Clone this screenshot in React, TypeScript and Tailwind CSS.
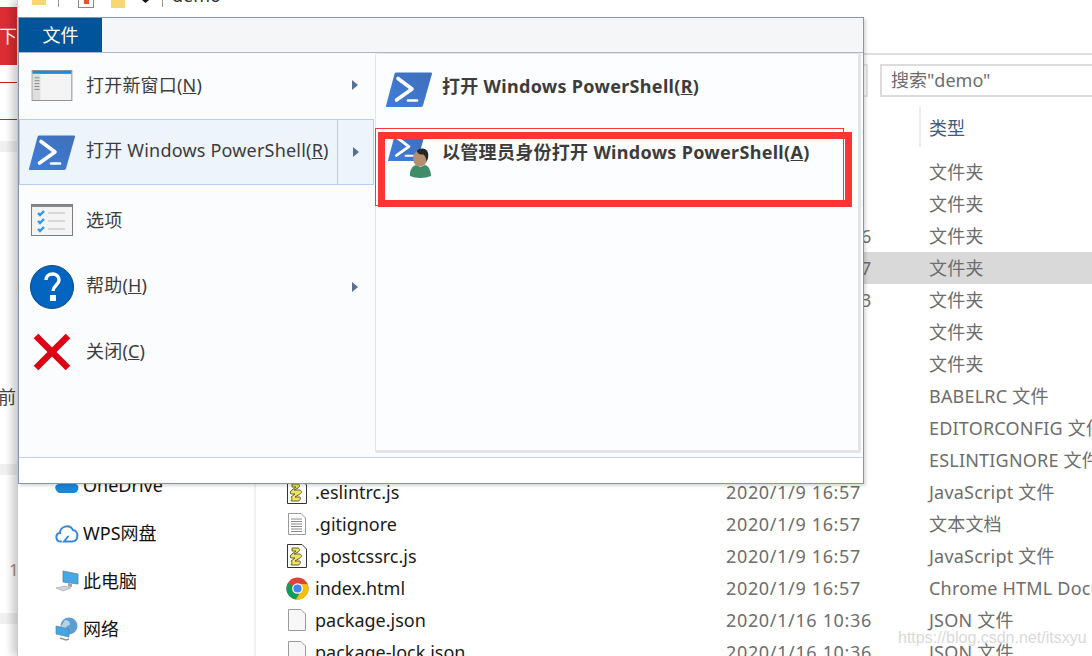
import React from "react";

const F = { fontFamily: '"Noto Sans","Noto Sans CJK SC",sans-serif' };

function Ps({ className = "" }: { className?: string }) {
  return (
    <svg viewBox="0 0 46 35" className={className}>
      <defs>
        <linearGradient id="psg" x1="0" y1="1" x2="1" y2="0">
          <stop offset="0" stopColor="#3f7ddc" />
          <stop offset="1" stopColor="#3f6fb8" />
        </linearGradient>
      </defs>
      <path d="M10 0.5H45a1 1 0 0 1 1 1.2L37 33.5a2 2 0 0 1-2 1.5H1a1 1 0 0 1-1-1.3L8.500 2a2 2 0 0 1 1.500-1.500z" fill="url(#psg)" />
      <path d="M12 6.500L26 17 10.500 28" fill="none" stroke="#fff" strokeWidth="3.600" strokeLinecap="round" strokeLinejoin="round" />
      <path d="M22 28.500H31" fill="none" stroke="#fff" strokeWidth="2.600" strokeLinecap="round" />
    </svg>
  );
}

function Win() {
  return (
    <svg viewBox="0 0 42 32" className="w-[42px] h-[31px]">
      <rect x=".5" y=".5" width="41" height="31" fill="#f4f4f4" stroke="#8e8e8e" />
      <rect x="1" y="1" width="40" height="3" fill="#1e88e5" />
      <rect x="1" y="4" width="8" height="27" fill="#dfdfdf" />
      <path d="M3 8h5M3 11h5M3 14h5M3 17h5M3 20h5" stroke="#888" strokeWidth="1" />
    </svg>
  );
}

function Opt() {
  return (
    <svg viewBox="0 0 42 32" className="w-[42px] h-[32px]">
      <rect x=".5" y=".5" width="41" height="31" fill="#f4f4f4" stroke="#7e7e7e" />
      <rect x="1" y="1" width="40" height="2" fill="#8a8a8a" />
      <path d="M7 9l2 2 4-4M7 17l2 2 4-4M7 25l2 2 4-4" fill="none" stroke="#2f96e8" strokeWidth="2.400" />
      <path d="M17 9h17M17 17h17M17 25h17" stroke="#bbb" strokeWidth="1" />
    </svg>
  );
}

function Help() {
  return (
    <svg viewBox="0 0 44 44" className="w-[44px] h-[44px]">
      <circle cx="22" cy="22" r="21.500" fill="#0465c0" stroke="#0a4a85" />
      <path d="M16 15c0-3.500 2.500-6 6.500-6s6.500 2.500 6.500 6c0 5-6 5.500-6 11" fill="none" stroke="#fff" strokeWidth="3.400" />
      <rect x="20" y="30" width="6" height="6" fill="#fff" />
    </svg>
  );
}

function CloseX() {
  return (
    <svg viewBox="0 0 38 38" className="w-[38px] h-[38px]">
      <path d="M3 3L35 35M35 3L3 35" stroke="#dc0014" strokeWidth="6.500" />
    </svg>
  );
}

function Arrow() {
  return (
    <svg viewBox="0 0 6 10" className="w-[6px] h-[10px]">
      <path d="M0 0L6 5 0 10z" fill="#5a6f92" />
    </svg>
  );
}

function Admin() {
  return (
    <svg viewBox="0 0 21 30" className="w-[21px] h-[30px]">
      <path d="M0 28c-.5-6 2.500-10 6-11l4.500 2 4.500-2c3.500 1 6 5 6 11-6 2.500-15 2.500-21 0z" fill="#3e8c68" />
      <ellipse cx="10" cy="10.500" rx="7" ry="8" fill="#b58e70" />
      <path d="M7 2.500C10 -.5 17 -.5 18 5c.6 3 .2 6-1.500 9-.2-3-.8-6-3-7.500C10 7 7 5.500 7 2.500z" fill="#262626" />
    </svg>
  );
}

function ScriptIcon() {
  return (
    <svg viewBox="0 0 20 24" className="w-[20px] h-[24px]">
      <path d="M.5.500H15l4.500 4.500V23.500H.5z" fill="#fff" stroke="#333" />
      <path d="M5 4h6c2 0 2 3 0 4l-4 2h6c2 1 2 3 0 4l-5 3h5c1 2 0 4-2 4H4c1-2 1-3 0-4l4-3H4c-1-1-1-3 1-4l4-3H5c0-1 0-2 0-3z" fill="#eee35c" stroke="#55552a" strokeWidth=".9" />
    </svg>
  );
}

function TextIcon() {
  return (
    <svg viewBox="0 0 18 22" className="w-[18px] h-[22px]">
      <path d="M.5.5H13l4.500 4.500V21.500H.5z" fill="#fff" stroke="#9a9a9a" />
      <path d="M3 6h11M3 8.500h11M3 11h11M3 13.500h11M3 16h11M3 18.500h11" stroke="#8a8a8a" strokeWidth="1" />
    </svg>
  );
}

function BlankIcon() {
  return (
    <svg viewBox="0 0 18 22" className="w-[18px] h-[22px]">
      <path d="M.5.5H13l4.500 4.500V21.500H.5z" fill="#f7f7f7" stroke="#9a9a9a" />
    </svg>
  );
}

function Chrome() {
  return (
    <svg viewBox="0 0 24 24" className="w-[23px] h-[23px]">
      <circle cx="12" cy="12" r="11.500" fill="#db4437" />
      <path d="M2 6.200A11.500 11.500 0 0 0 10.300 23.400L16 14 12 12z" fill="#0f9d58" />
      <path d="M10.300 23.400A11.500 11.500 0 0 0 22.600 7.500L12 7 16 14z" fill="#f4c20d" />
      <circle cx="12" cy="12" r="5.600" fill="#fff" />
      <circle cx="12" cy="12" r="4.300" fill="#4285f4" />
    </svg>
  );
}

function Onedrive() {
  return (
    <svg viewBox="0 0 24 16" className="w-[24px] h-[16px]">
      <path d="M1 13c-2-3 0-6 3-6 1-4 7-6 10-3 3-1 6 0 6 3 3 0 4 3 3 6-1 2-2 3-4 3H5c-2 0-3-1-4-3z" fill="#1b86d8" />
    </svg>
  );
}

function Cloud() {
  return (
    <svg viewBox="0 0 24 20" className="w-[24px] h-[20px]">
      <path d="M6 18.500c-6 0-6-8-1-8.500 0-6 9-10 13-3 6 1 6 11-1 11.500H9l4-5" fill="none" stroke="#3a86dc" strokeWidth="2" strokeLinecap="round" />
    </svg>
  );
}

function Pc() {
  return (
    <svg viewBox="0 0 24 22" className="w-[24px] h-[22px]">
      <path d="M8 1l15 3v10L8 12z" fill="#45a8e8" stroke="#6b7f90" strokeWidth=".8" />
      <path d="M13 13l4 1v3l-4-.5z" fill="#9aa4ac" />
      <path d="M1 18l9-2 6 2-8 3z" fill="#d0d4d8" stroke="#9aa4ac" strokeWidth=".6" />
    </svg>
  );
}

function Net() {
  return (
    <svg viewBox="0 0 24 24" className="w-[24px] h-[24px]">
      <circle cx="14" cy="9" r="8.500" fill="#5f9fd0" />
      <path d="M10 3c3 0 5 2 5 4s-4 1-4 4-4 1-5-2z" fill="#b5d3e6" />
      <path d="M1 9l13 3v8L1 17z" fill="#3fa7e6" stroke="#6c8092" strokeWidth=".7" />
      <path d="M5 21l6 2 3-1" fill="none" stroke="#8c98a2" strokeWidth="1.500" />
    </svg>
  );
}

const rows: [React.ReactNode, string, string, string, boolean?][] = [
  [null, "", "", "文件夹"],
  [null, "", "", "文件夹"],
  [null, "", "2020/1/16 10:36", "文件夹"],
  [null, "", "2020/1/16 10:37", "文件夹", true],
  [null, "", "2020/1/16 10:33", "文件夹"],
  [null, "", "", "文件夹"],
  [null, "", "", "文件夹"],
  [null, "", "", "BABELRC 文件"],
  [null, "", "", "EDITORCONFIG 文件"],
  [null, "", "", "ESLINTIGNORE 文件"],
  [<ScriptIcon />, ".eslintrc.js", "2020/1/9 16:57", "JavaScript 文件"],
  [<TextIcon />, ".gitignore", "2020/1/9 16:57", "文本文档"],
  [<ScriptIcon />, ".postcssrc.js", "2020/1/9 16:57", "JavaScript 文件"],
  [<Chrome />, "index.html", "2020/1/9 16:57", "Chrome HTML Document"],
  [<BlankIcon />, "package.json", "2020/1/16 10:36", "JSON 文件"],
  [<BlankIcon />, "package-lock.json", "2020/1/16 10:36", "JSON 文件"],
];

const side: [React.ReactNode, string][] = [
  [<Onedrive />, "OneDrive"],
  [<Cloud />, "WPS网盘"],
  [<Pc />, "此电脑"],
  [<Net />, "网络"],
];

function Item({ icon, children, arrow, active, box, text = "" }: { icon: React.ReactNode; children: React.ReactNode; arrow?: boolean; active?: boolean; box: string; text?: string }) {
  return (
    <div className={`${box} flex items-center pl-[9px] border ${active ? "bg-[#edf4fc] border-[#aed0f5]" : "border-transparent"}`}>
      <div className="w-[46px] flex justify-center shrink-0">{icon}</div>
      <div className={`ml-[11px] flex-1 text-[18px] tracking-[0.2px] text-[#3c3c3c] whitespace-nowrap ${text}`}>{children}</div>
      <div className={`w-[36px] h-full flex items-center justify-center shrink-0 ${active ? "border-l border-[#aed0f5]" : ""}`}>
        {arrow && <Arrow />}
      </div>
    </div>
  );
}

export default function App() {
  return (
    <div className="relative w-[1092px] h-[656px] overflow-hidden bg-white flex" style={F}>
      {/* page behind the window */}
      <div className="w-[17px] shrink-0 flex flex-col bg-white text-[18px] text-[#555]">
        <div className="h-[7px] shrink-0" />
        <div className="h-[58px] shrink-0 bg-[#dc2d32] text-white text-[18px] flex items-center overflow-hidden">
          <span className="-ml-px">下</span>
        </div>
        <div className="h-[17px] shrink-0" />
        <div className="h-px shrink-0 bg-[#d02020]" />
        <div className="h-[36px] shrink-0" />
        <div className="h-px shrink-0 bg-[#d02020]" />
        <div className="h-[21px] shrink-0" />
        <div className="h-[11px] shrink-0 bg-[#f0f0f0]" />
        <div className="h-[312px] shrink-0 flex items-end overflow-hidden pb-[53px] whitespace-nowrap">
          <span className="-ml-[2px] text-[#444]">前</span>
        </div>
        <div className="h-[11px] shrink-0 bg-[#f0f0f0]" />
        <div className="h-[138px] shrink-0 pt-[82px] text-[#b08a70] text-[17px]">
          <span className="ml-[9px]">1</span>
        </div>
        <div className="h-[11px] shrink-0 bg-[#f0f0f0]" />
      </div>

      {/* explorer */}
      <div className="flex-1 min-w-0 flex flex-col border-l border-[#c8c8c8] shadow-[-5px_0_8px_rgba(0,0,0,0.2)]">
        <div className="h-[55px] shrink-0 border-b-2 border-[#dfdfdf] overflow-hidden">
          <div className="flex items-start h-[8px] pl-[14px]">
            <div className="w-[14px] h-[5px] bg-[#f7d774]" />
            <div className="ml-[12px] w-px h-[7px] bg-[#999]" />
            <div className="ml-[19px] w-[16px] h-[8px] border-x border-b border-[#888] flex justify-center">
              <div className="w-[5px] h-[4px] bg-[#e2562d]" />
            </div>
            <div className="ml-[17px] w-[14px] h-[8px] bg-[#f7d774]" />
            <svg viewBox="0 0 7 3" className="ml-[17px] w-[7px] h-[3px]">
              <path d="M0 0H7L3.500 3z" fill="#111" />
            </svg>
            <div className="ml-[13px] w-px h-[7px] bg-[#999]" />
            <div className="ml-[9px] text-[18px] text-[#333] leading-none -mt-[14px]">demo</div>
          </div>
        </div>
        <div className="flex-1 flex min-h-0">
          <div className="w-[238px] shrink-0 border-r-2 border-[#f2f2f2] flex flex-col pt-[406px] pl-[37px] text-[18px] text-[#111]">
            {side.map(([ic, t], i) => (
              <div key={i} className="h-[48px] shrink-0 flex items-center">
                <div className="w-[28px] shrink-0 flex items-center">{ic}</div>
                <span>{t}</span>
              </div>
            ))}
          </div>
          <div className="flex-1 min-w-0 flex flex-col">
            <div className="h-[9px] shrink-0" />
            <div className="h-[33px] shrink-0 flex justify-end">
              <div className="w-[30px] shrink-0 mr-[12px] border-2 border-l-0 border-[#e4e4e4]" />
              <div className="w-[212px] shrink-0 border-2 border-r-0 border-[#dcdcdc] text-[18px] text-[#6d6d6d] flex items-center pl-[9px]">搜索"demo"</div>
            </div>
            <div className="h-[10px] shrink-0" />
            <div className="h-[40px] shrink-0 flex pl-[663px]">
              <div className="border-l-2 border-[#ececec] pl-[8px] pt-[2px] text-[18px] text-[#3f5b7c] flex items-center">类型</div>
            </div>
            <div className="h-[9px] shrink-0" />
            <div className="flex flex-col">
              {rows.map(([ic, name, date, type, sel], i) => (
                <div key={i} className={`h-[32px] shrink-0 flex items-center whitespace-nowrap text-[18px] ${sel ? "bg-[#d9d9d9]" : ""}`}>
                  <div className="w-[30px] ml-[26px] flex justify-center shrink-0">{ic}</div>
                  <div className="w-[411px] ml-[3px] shrink-0 text-[#1a1a1a]">{name}</div>
                  <div className="w-[203px] shrink-0 text-[#6d6d6d] tracking-[0.65px]">{date}</div>
                  <div className="text-[#6d6d6d] tracking-[0.2px]">{type}</div>
                </div>
              ))}
            </div>
          </div>
        </div>
      </div>

      {/* file menu, lying over the explorer */}
      <div className="absolute left-[18px] top-[17px] w-[846px] h-[467px] bg-white border border-[#8496ad] shadow-[2px_2px_3px_rgba(0,0,0,0.15)] flex flex-col">
        <div className="h-[35px] shrink-0 bg-[#f5f6f7] border-b border-[#a8b9d0]">
          <div className="w-[83px] h-[34px] bg-[#005499] text-white text-[18px] flex items-center justify-center">文件</div>
        </div>
        <div className="h-[405px] shrink-0 bg-[#fbfcfe] border-b border-[#c5d3e8] flex">
          <div className="w-[355px] shrink-0 flex flex-col">
            <Item box="h-[66px] pb-[2px]" icon={<Win />} arrow>打开新窗口(<u>N</u>)</Item>
            <Item box="h-[66px]" text="-mt-[4px]" icon={<Ps className="w-[46px] h-[35px]" />} arrow active>打开 Windows PowerShell(<u>R</u>)</Item>
            <Item box="h-[70px]" icon={<Opt />}>选项</Item>
            <Item box="h-[64px]" text="-mt-[3px]" icon={<Help />} arrow>帮助(<u>H</u>)</Item>
            <Item box="h-[66px]" text="-mt-[2px]" icon={<CloseX />}>关闭(<u>C</u>)</Item>
          </div>
          <div className="w-[486px] ml-px h-[400px] border border-[#e2e4e8] border-b-[3px] border-r-[3px] rounded-[2px] bg-[#fcfdff] flex flex-col">
            <div className="h-[71px] flex items-center pl-[10px]">
              <Ps className="w-[46px] h-[35px] shrink-0" />
              <span className="ml-[10px] -mt-[6px] font-bold text-[18px] tracking-[0.3px] text-[#3c3c3c] whitespace-nowrap">打开 Windows PowerShell(<u>R</u>)</span>
            </div>
            <div className="h-[70px] flex items-start pl-[10px] pt-[8px]">
              <div className="relative w-[46px] h-[46px] shrink-0">
                <Ps className="ml-[2px] w-[37px] h-[28px]" />
                <div className="absolute left-[24px] top-[15px]"><Admin /></div>
              </div>
              <span className="ml-[10px] mt-[6px] font-bold text-[18px] tracking-[0.3px] text-[#3c3c3c] whitespace-nowrap">以管理员身份打开 Windows PowerShell(<u>A</u>)</span>
            </div>
          </div>
        </div>
      </div>

      {/* hand-drawn red annotation boxes */}
      <div className="absolute left-[375px] top-[128px] w-[469px] h-[78px] border border-[#ff3535]" />
      <div className="absolute left-[378px] top-[132px] w-[474px] h-[75px] border-[7px] border-[#ff3535]" />

      {/* watermark */}
      <div className="absolute left-[898px] top-[628px] text-[16px] leading-[20px] text-[#d9d9d9] whitespace-nowrap" style={{ fontFamily: '"Liberation Sans",sans-serif' }}>https://blog.csdn.net/itsxyu</div>
    </div>
  );
}
